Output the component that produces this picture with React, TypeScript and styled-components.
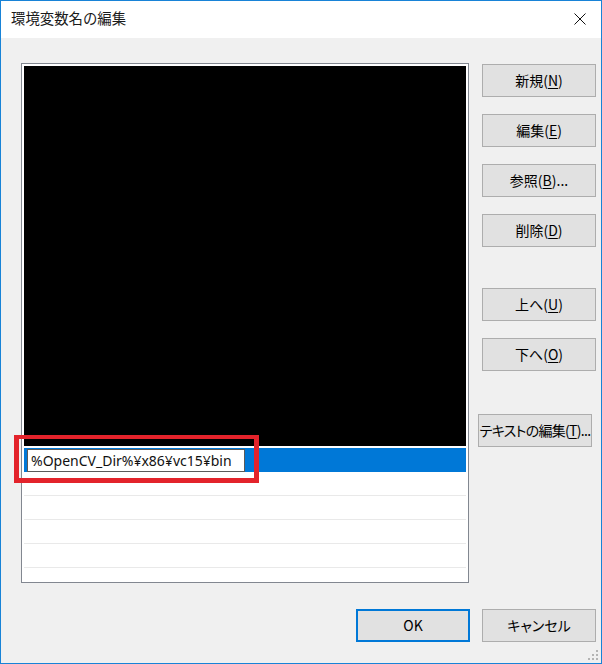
import React from "react";
import styled, { createGlobalStyle } from "styled-components";

const Global = createGlobalStyle`
  html, body { margin: 0; padding: 0; background: #f0f0f0; }
  body { font-family: "Noto Sans CJK JP", "Noto Sans", sans-serif; font-feature-settings: "palt"; }
  * { box-sizing: border-box; }
`;

const Window = styled.div`
  position: relative;
  width: 602px;
  height: 664px;
  border: 1px solid #1883d7;
  background: #f0f0f0;
  display: flex;
  flex-direction: column;
  overflow: hidden;
`;

const TitleBar = styled.div`
  height: 37px;
  background: #ffffff;
  display: flex;
  align-items: center;
  justify-content: space-between;
  padding: 0 10px 2px 10px;
  flex-shrink: 0;
`;

const Title = styled.div`
  font-size: 14.4px;
  color: #1a1a1a;
  line-height: 1;
  font-feature-settings: normal;
`;

const CloseBox = styled.div`
  width: 12px;
  height: 12px;
  margin-right: 5px;
  display: flex;
`;

const Client = styled.div`
  flex: 1;
  display: flex;
  flex-direction: column;
`;

const Main = styled.div`
  display: flex;
  align-items: flex-start;
`;

const ListBox = styled.div`
  position: relative;
  margin: 25px 0 0 20px;
  width: 448px;
  height: 520px;
  border: 1px solid #828790;
  background: #ffffff;
  padding: 2px 2px 0 2px;
  overflow: hidden;
  display: flex;
  flex-direction: column;
`;

const Redacted = styled.div`
  height: 380px;
  background: #000000;
  margin-bottom: 2px;
  flex-shrink: 0;
`;

const Row = styled.div<{ $selected?: boolean }>`
  height: 24px;
  flex-shrink: 0;
  background: ${(p) => (p.$selected ? "#0078d7" : "#ffffff")};
  border-bottom: 1px solid ${(p) => (p.$selected ? "#0078d7" : "#e9e9e9")};
  display: flex;
  align-items: flex-start;
  padding: 1px 0 0 3px;
`;

const EditBox = styled.div`
  width: 218px;
  height: 23px;
  background: #ffffff;
  border: 1px solid #5a5a5a;
  font-family: "Noto Sans", "Open Sans", sans-serif;
  font-size: 14px;
  color: #111;
  line-height: 21px;
  padding-left: 3px;
  white-space: nowrap;
  overflow: hidden;
`;

const Highlight = styled.div`
  position: absolute;
  left: 13px;
  top: 434px;
  width: 245px;
  height: 48px;
  border: 5px solid #e3232b;
  border-top-width: 4px;
  pointer-events: none;
`;

const ButtonColumn = styled.div`
  display: flex;
  flex-direction: column;
  padding-top: 26px;
  margin-left: 13px;
`;

const Button = styled.div<{ $gap?: number; $shift?: number; $default?: boolean; $tight?: boolean }>`
  width: 114px;
  height: 33px;
  margin-top: ${(p) => p.$gap ?? 0}px;
  margin-left: ${(p) => p.$shift ?? 0}px;
  background: #e1e1e1;
  border: ${(p) => (p.$default ? "2px solid #0078d7" : "1px solid #adadad")};
  display: flex;
  align-items: center;
  justify-content: center;
  font-size: 14px;
  letter-spacing: ${(p) => (p.$tight ? "-0.7px" : "0")};
  color: #000;
  line-height: 1;
  white-space: nowrap;
  padding-bottom: 1px;
`;

const Key = styled.span`
  text-decoration: underline;
  text-underline-offset: 2px;
`;

const Footer = styled.div`
  display: flex;
  justify-content: flex-end;
  gap: 12px;
  margin-top: 26px;
  padding-right: 5px;
`;

const Grip = styled.div`
  position: absolute;
  right: 2px;
  bottom: 2px;
  width: 12px;
  height: 12px;
  display: flex;
`;

const Label = ({ text, k, tail }: { text: string; k: string; tail?: string }) => (
  <span>
    {text}(<Key>{k}</Key>){tail ?? ""}
  </span>
);

export default function App() {
  return (
    <>
      <Global />
      <Window>
        <TitleBar>
          <Title>環境変数名の編集</Title>
          <CloseBox>
            <svg width="12" height="12" viewBox="0 0 12 12">
              <path d="M0.5 0.5 L11.5 11.5 M11.5 0.5 L0.5 11.5" stroke="#111" strokeWidth="1" fill="none" />
            </svg>
          </CloseBox>
        </TitleBar>
        <Client>
          <Main>
            <ListBox>
              <Redacted />
              <Row $selected>
                <EditBox>%OpenCV_Dir%¥x86¥vc15¥bin</EditBox>
              </Row>
              <Row />
              <Row />
              <Row />
              <Row />
              <Row />
            </ListBox>
            <ButtonColumn>
              <Button><Label text="新規" k="N" /></Button>
              <Button $gap={17}><Label text="編集" k="E" /></Button>
              <Button $gap={17}><Label text="参照" k="B" tail="..." /></Button>
              <Button $gap={17}><Label text="削除" k="D" /></Button>
              <Button $gap={41}><Label text="上へ" k="U" /></Button>
              <Button $gap={17}><Label text="下へ" k="O" /></Button>
              <Button $gap={43} $shift={-4} $tight><Label text="テキストの編集" k="T" tail="..." /></Button>
            </ButtonColumn>
          </Main>
          <Footer>
            <Button $default>OK</Button>
            <Button>キャンセル</Button>
          </Footer>
        </Client>
        <Highlight />
        <Grip>
          <svg width="12" height="12" viewBox="0 0 12 12">
            <g fill="#b4b4b4">
              <rect x="9" y="1" width="2" height="2" />
              <rect x="5" y="5" width="2" height="2" />
              <rect x="9" y="5" width="2" height="2" />
              <rect x="1" y="9" width="2" height="2" />
              <rect x="5" y="9" width="2" height="2" />
              <rect x="9" y="9" width="2" height="2" />
            </g>
          </svg>
        </Grip>
      </Window>
    </>
  );
}
